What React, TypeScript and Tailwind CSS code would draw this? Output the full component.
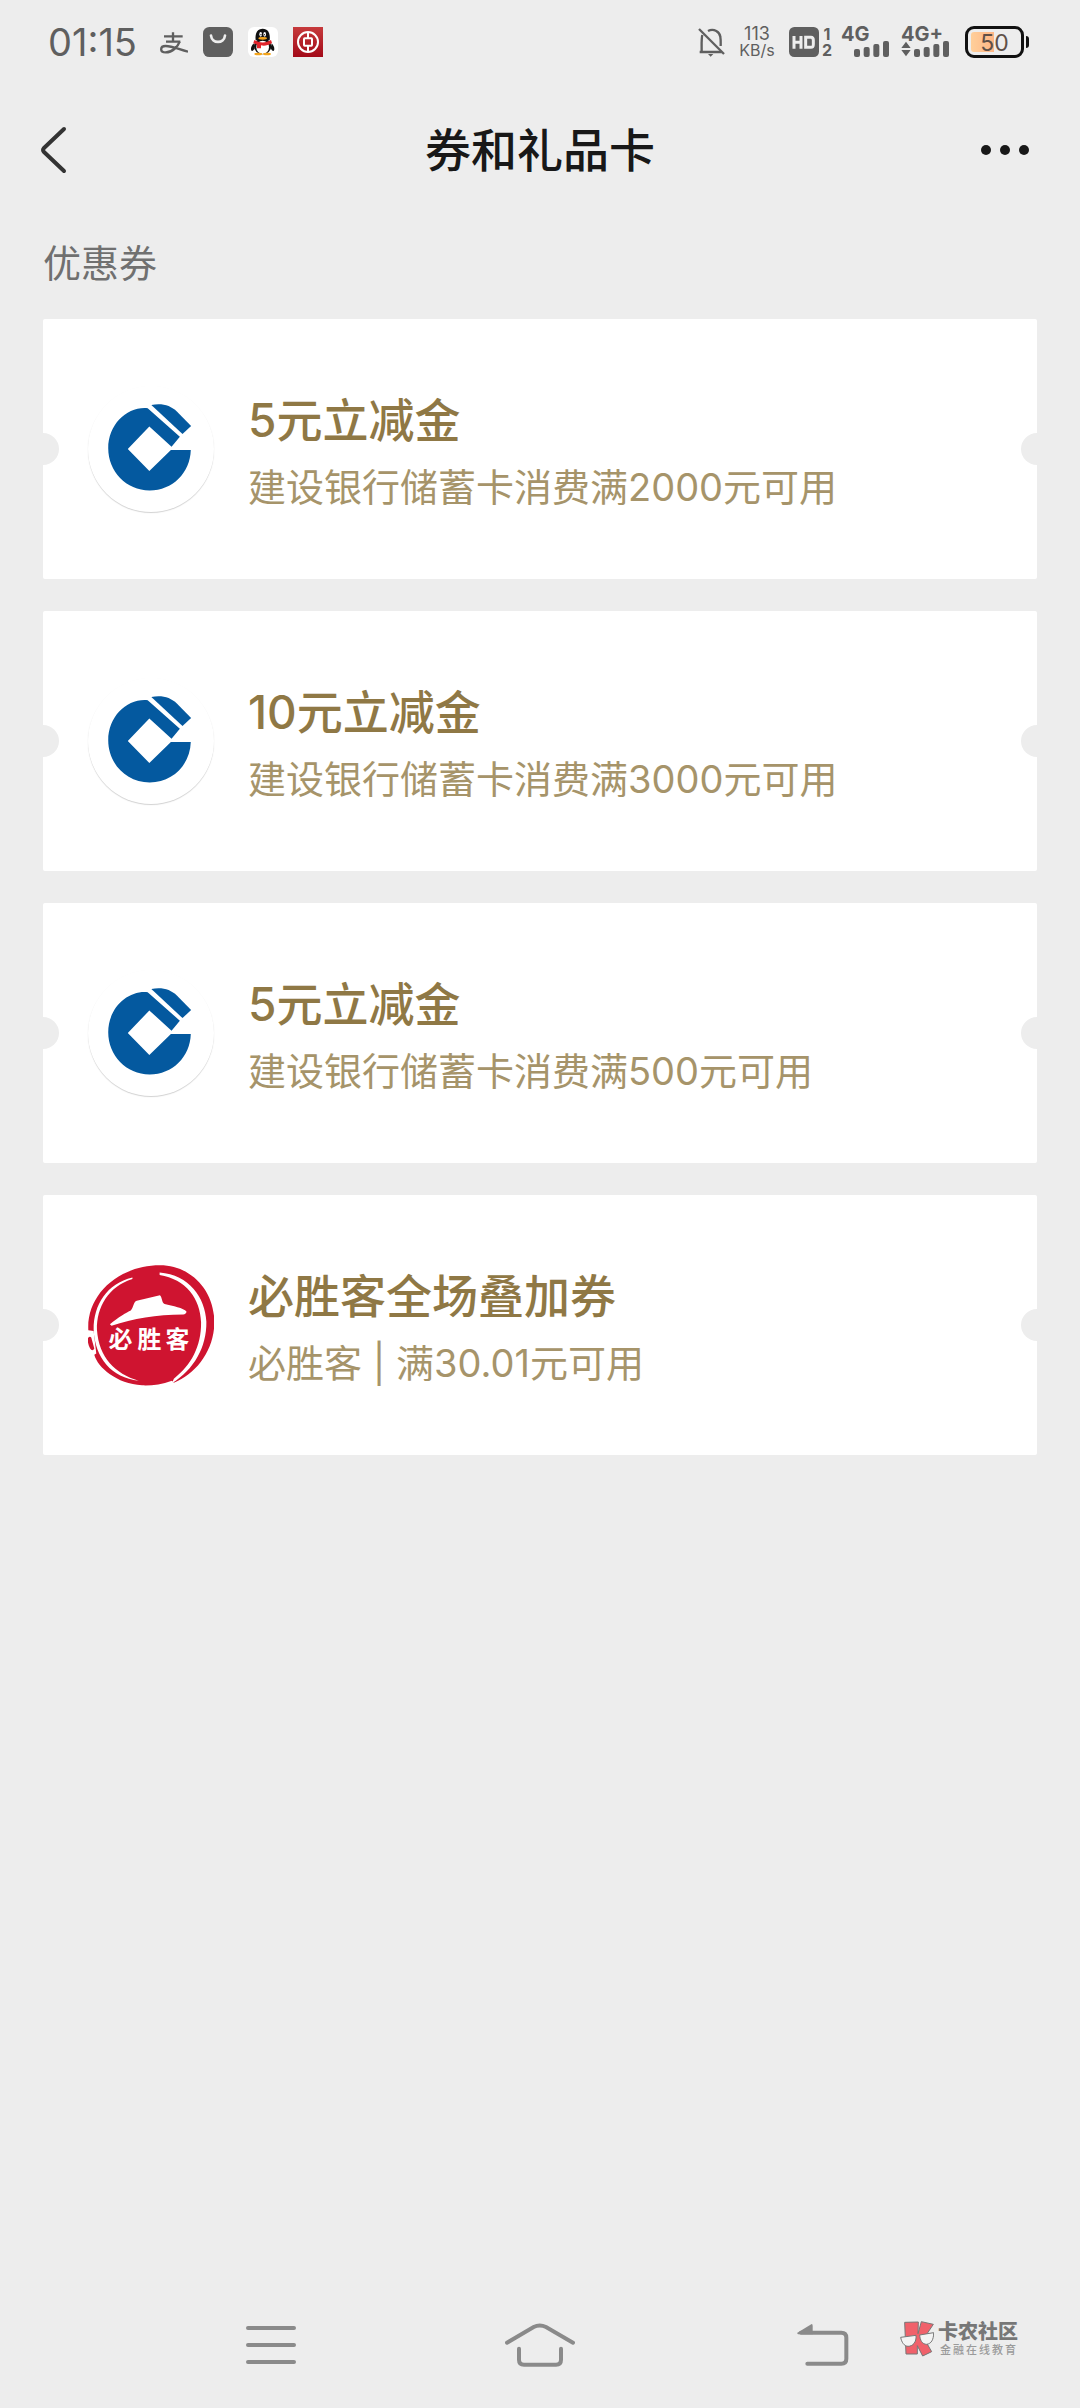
import type { ReactNode } from "react";

type Coupon = {
  id: number;
  title: string;
  detail: string;
  brand: "ccb" | "pizzahut";
};

const coupons: Coupon[] = [
  { id: 1, title: "5元立减金", detail: "建设银行储蓄卡消费满2000元可用", brand: "ccb" },
  { id: 2, title: "10元立减金", detail: "建设银行储蓄卡消费满3000元可用", brand: "ccb" },
  { id: 3, title: "5元立减金", detail: "建设银行储蓄卡消费满500元可用", brand: "ccb" },
  { id: 4, title: "必胜客全场叠加券", detail: "必胜客 | 满30.01元可用", brand: "pizzahut" },
];

/* ---------- Status bar icons ---------- */

function AlipayIcon() {
  return (
    <svg width="28" height="30" viewBox="480 80 84 90" fill="none" stroke="#5f5f5f" strokeWidth="7" aria-hidden="true">
      <path d="M492 108H548M519 96V124M498 124H541" />
      <path d="M539 124C534 138 518 156 497 156C479 156 479 137 497 137C517 137 536 147 564 154" />
    </svg>
  );
}

function BagIcon() {
  return (
    <svg width="30" height="30" viewBox="0 0 90 90" fill="none" aria-hidden="true">
      <rect width="90" height="90" rx="19" fill="#5f5f5f" />
      <path d="M24 26C27 51 63 51 66 26" stroke="#ededed" strokeWidth="8" strokeLinecap="round" />
    </svg>
  );
}

function PenguinIcon() {
  return (
    <svg width="30" height="30" viewBox="0 0 90 90" aria-hidden="true">
      <rect width="90" height="90" rx="18" fill="#fff" />
      <path d="M17 49C8 58 7 70 12 72C15 72 19 66 20 63ZM71 49C80 58 81 70 76 72C73 72 69 66 68 63Z" fill="#111" />
      <ellipse cx="44" cy="58" rx="26" ry="24" fill="#111" />
      <path d="M23 40C20 16 30 5 44 5C58 5 68 16 65 40Z" fill="#111" />
      <ellipse cx="44" cy="61" rx="19" ry="20" fill="#fff" />
      <ellipse cx="38" cy="22" rx="4" ry="7" fill="#fff" />
      <ellipse cx="50" cy="22" rx="4" ry="7" fill="#fff" />
      <circle cx="39" cy="23" r="2" fill="#111" />
      <circle cx="49" cy="23" r="2" fill="#111" />
      <ellipse cx="44" cy="34" rx="13" ry="4" fill="#f4a51c" />
      <path d="M19 39C34 49 54 49 69 39L72 48C60 56 48 57 39 55V64H27V53L16 48Z" fill="#e0242b" />
      <ellipse cx="31" cy="81" rx="12" ry="4" fill="#f4a51c" />
      <ellipse cx="57" cy="81" rx="12" ry="4" fill="#f4a51c" />
    </svg>
  );
}

function BankOfChinaIcon() {
  return (
    <svg width="30" height="30" viewBox="0 0 90 90" fill="none" aria-hidden="true">
      <defs>
        <linearGradient id="boc" x1="0" y1="0" x2="0" y2="1">
          <stop offset="0" stopColor="#c63a3c" />
          <stop offset="1" stopColor="#a30a18" />
        </linearGradient>
      </defs>
      <rect width="90" height="90" fill="url(#boc)" />
      <circle cx="45" cy="45" r="30" stroke="#fff" strokeWidth="6" />
      <rect x="33" y="34" width="24" height="22" rx="2" stroke="#fff" strokeWidth="6" />
      <path d="M45 15V34M45 56V75" stroke="#fff" strokeWidth="6" />
    </svg>
  );
}

function MutedBellIcon() {
  return (
    <svg width="27" height="30" viewBox="52 82 81 90" fill="none" stroke="#5f5f5f" strokeWidth="7" aria-hidden="true">
      <path d="M55 88L130 163" />
      <path d="M65 106C62 116 63 130 63 157H117M57 157H123" />
      <path d="M82 94C100 84 118 98 119 112C121 124 120 130 120 139" />
      <path d="M82 163H98L90 171Z" fill="#5f5f5f" stroke="none" />
    </svg>
  );
}

function HdBadge() {
  return (
    <svg width="30" height="30" viewBox="0 0 90 90" fill="none" stroke="#ededed" strokeWidth="9" aria-hidden="true">
      <rect width="90" height="90" rx="16" fill="#5f5f5f" stroke="none" />
      <path d="M15 27V65M36 27V65M15 46H36M50 31H66C71 31 73 34 73 40V52C73 59 71 61 66 61H50Z" />
    </svg>
  );
}

function SignalBars() {
  return (
    <svg width="35" height="16" viewBox="0 0 105 48" fill="#5f5f5f" aria-hidden="true">
      <rect x="0" y="24" width="18" height="24" rx="6" />
      <rect x="29" y="18" width="18" height="30" rx="6" />
      <rect x="58" y="9" width="18" height="39" rx="6" />
      <rect x="87" y="0" width="18" height="48" rx="6" />
    </svg>
  );
}

function DataArrows() {
  return (
    <svg width="10" height="16" viewBox="0 0 30 48" fill="#5f5f5f" aria-hidden="true">
      <path d="M15 2L29 21H1ZM15 46L29 27H1Z" />
    </svg>
  );
}

function Battery() {
  return (
    <div className="flex items-center gap-[2px]">
      <div className="flex h-8 w-[59px] rounded-[9px] border-[3px] border-[#111] p-[3px]">
        <div className="grid h-full w-full items-center rounded-[3px] bg-[linear-gradient(90deg,#ffcf9a_0%,#ffb685_48%,transparent_48%)] text-center text-[23px] leading-none text-[#5f5048]">
          50
        </div>
      </div>
      <div className="h-3 w-[3px] rounded-r-full bg-[#111]" />
    </div>
  );
}

function StatusBar() {
  return (
    <div className="flex h-[84px] items-center justify-between pr-[51px] pl-12 text-[#5f5f5f]">
      <div className="flex items-center">
        <span className="w-28 text-[38px] leading-none">01:15</span>
        <div className="flex items-center gap-[15px]">
          <AlipayIcon />
          <BagIcon />
          <PenguinIcon />
          <BankOfChinaIcon />
        </div>
      </div>
      <div className="flex items-center">
        <MutedBellIcon />
        <div className="ml-3 flex w-10 flex-col items-center">
          <span className="text-[18px] leading-4">113</span>
          <span className="text-[16px] leading-4">KB/s</span>
        </div>
        <div className="ml-3 flex items-center gap-[2px]">
          <HdBadge />
          <div className="flex w-3 flex-col items-center text-[16px] font-bold leading-4">
            <span>1</span>
            <span>2</span>
          </div>
        </div>
        <div className="ml-2 flex w-12 flex-col">
          <span className="text-[20px] font-bold leading-[14px]">4G</span>
          <div className="flex justify-end">
            <SignalBars />
          </div>
        </div>
        <div className="ml-3 flex w-12 flex-col">
          <span className="text-[20px] font-bold leading-[14px]">4G+</span>
          <div className="flex gap-[3px]">
            <DataArrows />
            <SignalBars />
          </div>
        </div>
        <div className="ml-4">
          <Battery />
        </div>
      </div>
    </div>
  );
}

/* ---------- Brand logos ---------- */

function CcbLogo() {
  return (
    <svg className="size-full" viewBox="175 230 380 380" fill="#04599f" role="img" aria-label="建设银行">
      <path d="M355 297L452 383L427 413L360 352L295 420L360 486L425 423H485C483 492 430 545 361 545C290 545 236 488 236 418C236 345 294 291 355 297Z" />
      <path d="M366 287C398 281 424 288 443 307L486 351L460 375Z" />
    </svg>
  );
}

function PizzaHutLogo() {
  return (
    <svg className="size-full" viewBox="175 242 380 380" role="img" aria-label="必胜客">
      <path
        d="M176 448C170 340 268 252 392 252C486 252 556 328 556 424C556 506 502 580 434 606L428 600C396 612 366 615 338 614C262 610 204 560 194 522L200 518L192 450Z"
        fill="#cf1430"
      />
      <path d="M175 471C180 465 185 467 186 474L194 503C190 511 185 508 181 502C176 492 173 481 175 471Z" fill="#cf1430" />
      <path d="M309 289C232 308 192 370 192 446C196 532 246 590 328 600C256 578 208 530 202 446C201 378 236 316 309 293Z" fill="#fff" />
      <path d="M391 274C480 281 529 350 532 422C533 500 494 566 428 608L434 594C486 554 517 496 516 424C514 352 470 294 391 281Z" fill="#fff" />
      <path d="M241 430C266 408 292 394 304 388C312 380 312 362 322 359L392 342C400 350 396 362 406 369C430 374 464 382 472 391C472 397 468 399 462 400C380 400 312 412 246 434Z" fill="#fff" />
      <text
        x="237 324 409"
        y="500"
        fill="#fff"
        className="font-['Noto_Sans_CJK_SC',sans-serif] text-[72px] font-bold"
      >
        必胜客
      </text>
    </svg>
  );
}

/* ---------- Coupon card ---------- */

function CouponCard({ coupon }: { coupon: Coupon }) {
  const isBank = coupon.brand === "ccb";
  return (
    <li className="relative overflow-hidden rounded-[2px] bg-white">
      <a href={`#coupon-${coupon.id}`} className="flex h-[260px] items-center gap-[34px] px-[45px]">
        <span
          className={
            isBank
              ? "size-[126px] shrink-0 rounded-full bg-white shadow-[0_1px_1px_rgba(0,0,0,0.18)]"
              : "size-[126px] shrink-0"
          }
        >
          {isBank ? <CcbLogo /> : <PizzaHutLogo />}
        </span>
        <span className="flex min-w-0 flex-col">
          <span className="text-[46px] font-medium leading-[76px] text-[#8f7845]">{coupon.title}</span>
          <span className="text-[38px] leading-[58px] text-[#a6946a]">{coupon.detail}</span>
        </span>
      </a>
      <span className="absolute top-1/2 -left-4 size-8 -translate-y-1/2 rounded-full bg-[#ededed]" />
      <span className="absolute top-1/2 -right-4 size-8 -translate-y-1/2 rounded-full bg-[#ededed]" />
    </li>
  );
}

/* ---------- System navigation ---------- */

function NavButton({ label, children }: { label: string; children: ReactNode }) {
  return (
    <button type="button" aria-label={label} className="flex h-full items-center justify-center">
      {children}
    </button>
  );
}

function Watermark() {
  return (
    <div className="absolute right-[62px] bottom-[51px] flex items-center gap-1">
      <svg width="34" height="36" viewBox="420 92 102 108" aria-hidden="true">
        <g fill="#f0616b" stroke="#777" strokeWidth="3" strokeLinejoin="round">
          <path d="M434 96L475 95L474 130L484 94L520 102L492 144L515 184L488 197L472 166V191H438Z" />
        </g>
        <g fill="#f4f4f4" stroke="#777" strokeWidth="3">
          <path d="M422 141L468 135C470 156 458 168 444 168C432 167 425 156 422 141Z" />
          <path d="M479 134L521 127C521 148 514 160 500 162C487 162 480 150 479 134Z" />
        </g>
      </svg>
      <div className="flex flex-col items-end">
        <span className="text-[20px] font-black leading-[22px] text-[#777]">卡农社区</span>
        <span className="text-[11px] font-medium leading-[14px] tracking-[2px] text-[#9a9a9a]">金融在线教育</span>
      </div>
    </div>
  );
}

function SystemNav() {
  return (
    <nav className="relative mt-auto grid h-[126px] grid-cols-3 px-[136px]">
      <NavButton label="最近任务">
        <svg width="50" height="42" viewBox="78 102 150 126" stroke="#8a8a8a" strokeWidth="12" strokeLinecap="round" aria-hidden="true">
          <path d="M84 114H222M84 165H222M84 216H222" />
        </svg>
      </NavButton>
      <NavButton label="主屏幕">
        <svg width="70" height="44" viewBox="858 97 210 132" fill="none" stroke="#8a8a8a" strokeWidth="12" strokeLinecap="round" aria-hidden="true">
          <path d="M864 156L944 109Q962 100 981 109L1062 156" />
          <path d="M900 174V207Q900 222 915 222H1011Q1026 222 1026 207V174" />
        </svg>
      </NavButton>
      <NavButton label="返回">
        <svg className="ml-7" width="52" height="42" viewBox="113 97 156 126" fill="none" stroke="#8a8a8a" strokeWidth="12" strokeLinecap="round" aria-hidden="true">
          <path d="M144 216H246Q261 216 261 201V138Q261 123 246 123H125" />
          <path d="M113 124L157 97Q160 97 160 102V128H116Z" fill="#8a8a8a" stroke="none" />
        </svg>
      </NavButton>
      <Watermark />
    </nav>
  );
}

/* ---------- Page ---------- */

export default function App() {
  return (
    <div className="flex min-h-screen flex-col bg-[#ededed] font-['Inter','Noto_Sans_CJK_SC',sans-serif]">
      <StatusBar />
      <header className="grid h-[132px] grid-cols-[1fr_auto_1fr] items-center px-10">
        <button type="button" aria-label="返回" className="justify-self-start">
          <svg width="27" height="48" viewBox="0 0 27 48" fill="none" stroke="#333" strokeWidth="4" strokeLinecap="round" strokeLinejoin="round" aria-hidden="true">
            <path d="M24 3L4 22Q2 24 4 26L24 45" />
          </svg>
        </button>
        <h1 className="text-[46px] font-medium leading-none text-[#181818]">券和礼品卡</h1>
        <button type="button" aria-label="更多" className="flex gap-[9px] justify-self-end pr-[11px]">
          <span className="size-[10px] rounded-full bg-[#181818]" />
          <span className="size-[10px] rounded-full bg-[#181818]" />
          <span className="size-[10px] rounded-full bg-[#181818]" />
        </button>
      </header>
      <main className="px-[43px]">
        <h2 className="pt-[18px] pb-[27px] text-[38px] leading-[58px] text-[#707070]">优惠券</h2>
        <ul className="flex flex-col gap-8">
          {coupons.map((coupon) => (
            <CouponCard key={coupon.id} coupon={coupon} />
          ))}
        </ul>
      </main>
      <SystemNav />
    </div>
  );
}
